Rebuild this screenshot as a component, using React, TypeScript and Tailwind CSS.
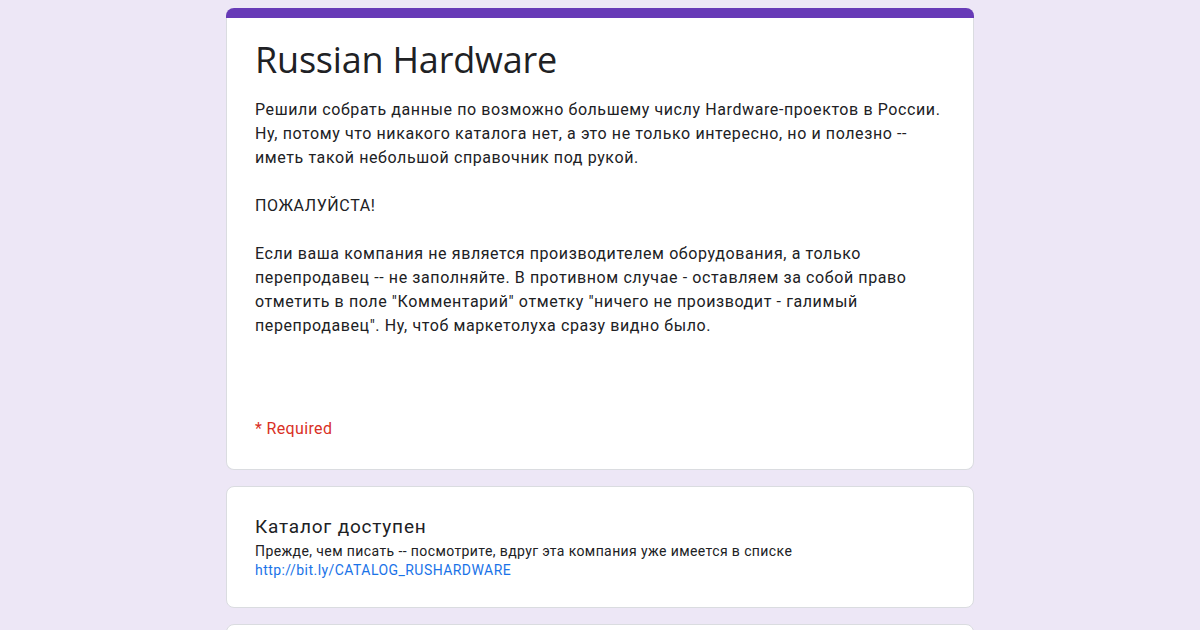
export default function App() {
  return (
    <div className="h-[630px] w-full overflow-hidden bg-[#ede7f6] font-['Roboto','Liberation_Sans',sans-serif] text-[#202124]">
      <div className="mx-auto flex w-[748px] flex-col gap-4 pt-2">
        <div className="rounded-lg border border-[#dadce0] border-t-0 bg-white">
          <div className="h-[10px] rounded-t-lg bg-[#673ab7] -mx-px" />
          <div className="px-[28px] pt-[18px] pb-[28px]">
            <h1 className="text-[36px] leading-[48px] font-normal tracking-[-0.2px] text-[#202124] font-['Open_Sans','Roboto',sans-serif]">
              Russian Hardware
            </h1>
            <div className="mt-[14px] text-[16px] leading-[24px] tracking-[0.6px] text-[#202124]">
              <p>Решили собрать данные по возможно большему числу Hardware-проектов в России.</p>
              <p>Ну, потому что никакого каталога нет, а это не только интересно, но и полезно --</p>
              <p>иметь такой небольшой справочник под рукой.</p>
              <p>&nbsp;</p>
              <p>ПОЖАЛУЙСТА!</p>
              <p>&nbsp;</p>
              <p>Если ваша компания не является производителем оборудования, а только</p>
              <p>перепродавец -- не заполняйте. В противном случае - оставляем за собой право</p>
              <p>отметить в поле "Комментарий" отметку "ничего не производит - галимый</p>
              <p>перепродавец". Ну, чтоб маркетолуха сразу видно было.</p>
            </div>
            <div className="mt-[79px] text-[16px] leading-[24px] tracking-[0.35px] text-[#d93025]">* Required</div>
          </div>
        </div>

        <div className="rounded-lg border border-[#dadce0] bg-white px-[28px] pt-[28px] pb-[27px]">
          <div className="text-[19px] leading-[24px] font-normal tracking-[0.8px] text-[#202124]">Каталог доступен</div>
          <div className="mt-[3px] text-[14px] leading-[19px] tracking-[0.4px] text-[#202124]">
            Прежде, чем писать -- посмотрите, вдруг эта компания уже имеется в списке
          </div>
          <a href="#" className="block text-[14px] leading-[19px] tracking-[0.45px] text-[#1a73e8]">
            http://bit.ly/CATALOG_RUSHARDWARE
          </a>
        </div>

        <div className="h-[60px] rounded-lg border border-[#dadce0] bg-white" />
      </div>
    </div>
  );
}
